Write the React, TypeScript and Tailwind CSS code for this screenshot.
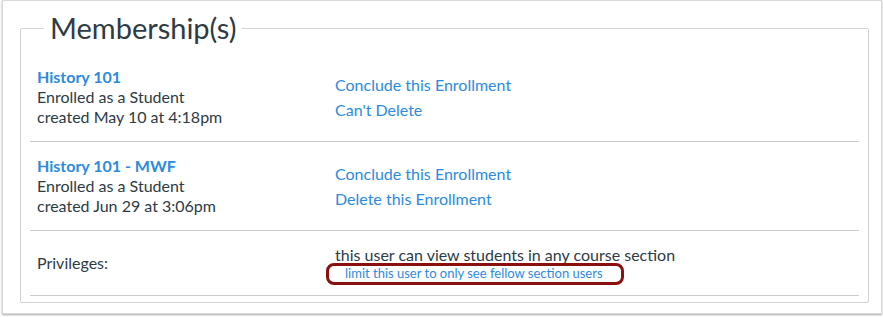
const enrollments = [
  {
    course: 'History 101',
    created: 'created May 10 at 4:18pm',
    actions: ['Conclude this Enrollment', "Can't Delete"],
  },
  {
    course: 'History 101 - MWF',
    created: 'created Jun 29 at 3:06pm',
    actions: ['Conclude this Enrollment', 'Delete this Enrollment'],
  },
];

export default function App() {
  return (
    <div className="w-[883px] h-[317px] bg-white font-['Lato','Noto_Sans',sans-serif] text-[#2d3b45]">
      <div className="ml-[2px] w-[880px] h-[314px] border border-[#d9d9d9] bg-white shadow-[0_1px_2px_rgba(0,0,0,0.35)] pt-[7px]">
        <fieldset className="ml-[17px] mr-[12px] border border-[#cfd4d8] rounded-[2px] px-[9px] pb-[6px]">
          <legend className="ml-[14px] px-[6px] text-[29px] leading-[40px] text-[#2d3b45]">Membership(s)</legend>
          <div className="pt-[5px]">
            {enrollments.map((e) => (
              <div key={e.course} className="flex items-center h-[89px] border-b border-[#c7cdd1] pl-[7px]">
                <div className="w-[298px] text-[16px] leading-[20px]">
                  <a className="block font-bold text-[#2b8be0]">{e.course}</a>
                  <div>Enrolled as a Student</div>
                  <div>{e.created}</div>
                </div>
                <div className="text-[16px] leading-[25px] text-[#2b8be0]">
                  {e.actions.map((a) => (
                    <a key={a} className="block">{a}</a>
                  ))}
                </div>
              </div>
            ))}
            <div className="flex items-center h-[65px] border-b border-[#c7cdd1] pl-[7px]">
              <div className="w-[298px] text-[16px] leading-[20px]">Privileges:</div>
              <div>
                <div className="text-[16px] leading-[20px]">this user can view students in any course section</div>
                <div className="relative ml-[10px] w-fit">
                  <a className="block text-[13px] leading-[16px] text-[#2b8be0]">limit this user to only see fellow section users</a>
                  <span className="absolute -left-[19px] -right-[21px] -top-[2px] -bottom-[4px] rounded-[8px] border-[3px] border-[#8a1010]" />
                </div>
              </div>
            </div>
          </div>
        </fieldset>
      </div>
    </div>
  );
}
